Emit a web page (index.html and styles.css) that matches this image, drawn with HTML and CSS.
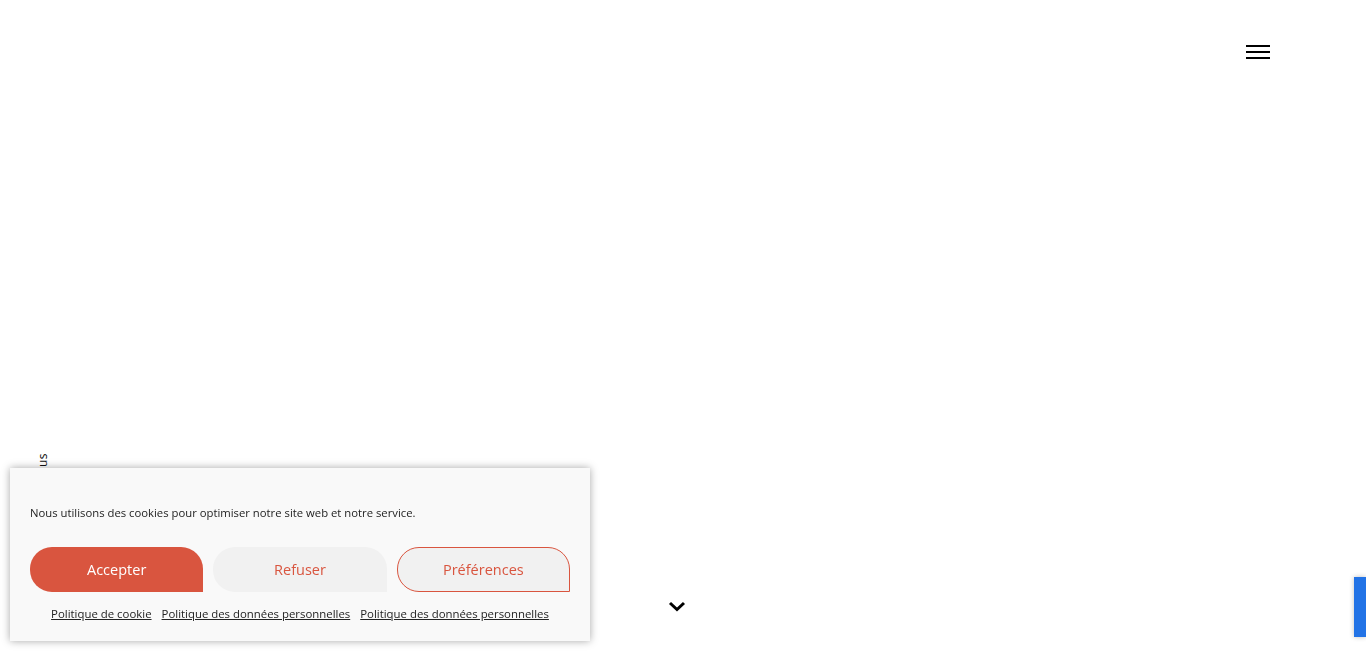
FILE: index.html
```html
<!DOCTYPE html>
<html lang="fr">
<head>
    <meta charset="UTF-8">
    <meta name="viewport" content="width=device-width, initial-scale=1.0">
    <title>Accueil</title>
    <link rel="stylesheet" href="styles.css">
</head>
<body>
    <header class="site-header">
        <button class="burger" aria-label="Menu">
            <span></span><span></span><span></span>
        </button>
    </header>

    <main class="hero">
        <div class="side-label">Suivez-nous</div>
        <a class="scroll-down" href="#" aria-label="Défiler">
            <svg width="18" height="12" viewBox="0 0 18 12"><path d="M2 3 L9 9.5 L16 3" fill="none" stroke="#000" stroke-width="3"/></svg>
        </a>
    </main>

    <div class="cookie-banner">
        <p class="cookie-message">Nous utilisons des cookies pour optimiser notre site web et notre service.</p>
        <div class="cookie-buttons">
            <button class="btn btn-accept">Accepter</button>
            <button class="btn btn-deny">Refuser</button>
            <button class="btn btn-prefs">Préférences</button>
        </div>
        <div class="cookie-links">
            <a href="#">Politique de cookie</a>
            <a href="#">Politique des données personnelles</a>
            <a href="#">Politique des données personnelles</a>
        </div>
    </div>

    <div class="captcha-badge"></div>
</body>
</html>
```

FILE: styles.css
```css
html, body {
    margin: 0;
    padding: 0;
    height: 100%;
    overflow: hidden;
}
body {
    font-family: "Open Sans", "Noto Sans", sans-serif;
    background: #fff;
    color: #222;
}
.site-header {
    display: flex;
    justify-content: flex-end;
    padding: 45px 96px 0 0;
}
.burger {
    display: flex;
    flex-direction: column;
    gap: 4px;
    width: 24px;
    padding: 0;
    border: none;
    background: none;
    cursor: pointer;
}
.burger span {
    display: block;
    height: 2px;
    background: #000;
}
.hero {
    position: relative;
    height: 570px;
}
.side-label {
    position: absolute;
    left: 34px;
    top: 394px;
    writing-mode: vertical-rl;
    transform: rotate(180deg);
    font-size: 12px;
    color: #111;
    letter-spacing: 0.5px;
}
.scroll-down {
    position: absolute;
    left: 668px;
    top: 541px;
    display: block;
    line-height: 0;
}
.cookie-banner {
    position: fixed;
    left: 10px;
    bottom: 10px;
    width: 540px;
    padding: 38px 20px 18px;
    background: #f9f9f9;
    box-shadow: 0 0 8px rgba(0, 0, 0, 0.35);
    z-index: 10;
}
.cookie-message {
    margin: 0 0 27px;
    font-size: 11.3px;
    line-height: 14px;
    color: #222;
}
.cookie-buttons {
    display: grid;
    grid-template-columns: repeat(3, 1fr);
    gap: 10px;
}
.btn {
    height: 45px;
    font-family: inherit;
    font-size: 14.5px;
    border-radius: 22px 22px 0 22px;
    border: 1px solid transparent;
    cursor: pointer;
}
.btn-accept {
    background: #d9553f;
    color: #fff;
}
.btn-deny {
    background: #f1f1f1;
    color: #d9553f;
}
.btn-prefs {
    background: #f1f1f1;
    color: #d9553f;
    border-color: #d9553f;
}
.cookie-links {
    display: flex;
    justify-content: center;
    gap: 10px;
    margin-top: 13px;
    font-size: 11.4px;
    line-height: 18px;
}
.cookie-links a {
    color: #222;
    text-decoration: underline;
}
.captcha-badge {
    position: fixed;
    right: 0;
    top: 577px;
    width: 12px;
    height: 60px;
    background: #2273e6;
    box-shadow: 0 0 5px rgba(0, 0, 0, 0.25);
}
```
